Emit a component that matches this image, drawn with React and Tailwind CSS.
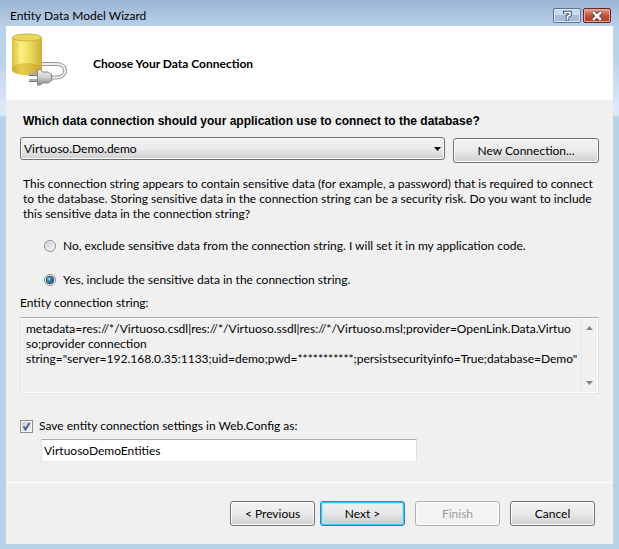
import { useState } from "react";

const BUTTON_BASE = "h-[25px] rounded-[3px] border text-center whitespace-nowrap";
const BUTTON_FACE =
  "bg-linear-to-b from-[#f2f2f2] from-0% via-[#ebebeb] via-48% to-[#cfcfcf] to-100% shadow-[inset_0_0_0_1px_#fcfcfc]";

function Button({ children, className = "", variant = "normal", ...rest }) {
  const variants = {
    normal: `border-[#707070] ${BUTTON_FACE}`,
    primary:
      "border-[#3c7fb1] bg-linear-to-b from-[#f0f0f0] via-[#e6e8e9] via-48% to-[#cacbcc] shadow-[inset_0_0_0_1px_#35cdf5,inset_0_0_0_2px_#a5e3f5]",
    disabled: "border-[#adb2b5] bg-[#f4f4f4] text-[#9a9a9a] shadow-[inset_0_0_0_1px_#fbfbfb]",
  };
  return (
    <button type="button" disabled={variant === "disabled"} className={`${BUTTON_BASE} ${variants[variant]} ${className}`} {...rest}>
      {children}
    </button>
  );
}

function DatabaseIcon() {
  return (
    <svg width="58" height="54" viewBox="0 0 58 54" aria-hidden="true">
      <defs>
        <linearGradient id="body" x1="0" x2="1" y1="0" y2="0">
          <stop offset="0" stopColor="#d9bd35" />
          <stop offset="0.3" stopColor="#fbf384" />
          <stop offset="0.6" stopColor="#ecdc5e" />
          <stop offset="1" stopColor="#cdac35" />
        </linearGradient>
        <linearGradient id="plug" x1="0" x2="0" y1="0" y2="1">
          <stop offset="0" stopColor="#f4f4f4" />
          <stop offset="0.5" stopColor="#cfcfcf" />
          <stop offset="1" stopColor="#8c8c8c" />
        </linearGradient>
      </defs>
      <path d="M0 4.500v32.500c0 3 6.500 5.500 15 5.500s15-2.500 15-5.500V4.500z" fill="url(#body)" />
      <ellipse cx="15" cy="36" rx="15" ry="6" fill="#c79a12" opacity="0.45" />
      <ellipse cx="15" cy="4.500" rx="14.500" ry="3.500" fill="#e9d65c" stroke="#d0b040" />
      <path d="M30 31h14c5 0 9 2 9 6.500s-4 7-9 7h-6" fill="none" stroke="#999" strokeWidth="4" />
      <path d="M30 31h14c5 0 9 2 9 6.500s-4 7-9 7h-6" fill="none" stroke="#ededed" strokeWidth="2" />
      <path d="M17 41.500h9M17 47.500h9" stroke="#777" strokeWidth="3" />
      <path d="M17 41h8M17 47h8" stroke="#e4e4e4" strokeWidth="1" />
      <path d="M25.500 36.500h3l2 2.500h6l2 2h1v7h-1l-2 2h-6l-2 2h-3z" fill="url(#plug)" stroke="#858585" />
    </svg>
  );
}

function TitleBar() {
  return (
    <header className="flex h-[26px] items-start justify-between pl-1 pr-[2px]">
      <h1 className="pt-2 leading-4">Entity Data Model Wizard</h1>
      <div className="flex gap-[2px] pt-2">
        <button
          type="button"
          aria-label="Help"
          className="flex h-[15px] w-7 items-center justify-center rounded-[2px] border border-[#60738c] bg-linear-to-b from-[#c9dbee] from-50% to-[#a5bdd8] to-50% shadow-[inset_0_0_0_1px_#dbe8f5]"
        >
          <svg width="9" height="12" viewBox="0 0 9 12" fill="none">
            <path d="M1.500 4V2.500h5.500V5L4.500 6.500V8M4.500 9v2" stroke="#46536a" strokeWidth="3.500" />
            <path d="M2 4V2.500h5V5L4.500 6.500V8M4.500 9v1.500" stroke="#fff" strokeWidth="1.500" />
          </svg>
        </button>
        <button
          type="button"
          aria-label="Close"
          className="flex h-[15px] w-7 items-center justify-center rounded-[2px] border border-[#6b2420] bg-linear-to-b from-[#d9978b] from-10% via-[#c4523d] via-50% to-[#b93d25] shadow-[inset_0_0_0_1px_#e0aaa0]"
        >
          <svg width="12" height="10" viewBox="0 0 12 10" fill="none">
            <path d="M2 1l8 8M10 1l-8 8" stroke="#5c3b3e" strokeWidth="4.500" />
            <path d="M3 2l6 6M9 2l-6 6" stroke="#fff" strokeWidth="2.500" strokeLinecap="square" />
          </svg>
        </button>
      </div>
    </header>
  );
}

function RadioOption({ checked, onChange, children }) {
  return (
    <label className="flex items-center gap-[7px] leading-4">
      <span className="grid shrink-0">
        <input
          type="radio"
          name="sensitive"
          checked={checked}
          onChange={onChange}
          className="col-start-1 row-start-1 size-3 appearance-none rounded-full border border-[#8b8f91] bg-linear-to-br from-[#c9cdd1] to-[#f9f9f9] shadow-[inset_0_0_0_1px_#f1f1f1]"
        />
        {checked && (
          <span className="pointer-events-none col-start-1 row-start-1 size-[6px] place-self-center rounded-full bg-radial-[at_35%_35%] from-[#8fdcf5] from-5% via-[#1f74a3] via-45% to-[#0b3554] shadow-[0_0_0_1px_#1d4563]" />
        )}
      </span>
      {children}
    </label>
  );
}

const CONNECTION_STRING = [
  "metadata=res://*/Virtuoso.csdl|res://*/Virtuoso.ssdl|res://*/Virtuoso.msl;provider=OpenLink.Data.Virtuo",
  "so;provider connection",
  'string="server=192.168.0.35:1133;uid=demo;pwd=***********;persistsecurityinfo=True;database=Demo"',
].join("\n");

export default function App() {
  const [include, setInclude] = useState(true);
  const [save, setSave] = useState(true);
  const [name, setName] = useState("VirtuosoDemoEntities");

  return (
    <div className="flex min-h-screen flex-col bg-[linear-gradient(to_bottom,#9ab4d2_0px,#bcd2eb_28px,#bcd2eb_60px,#dce9f7_108px,#dce9f7_115px,#bad1ea_117px)] px-[6px] pb-[5px] font-[Lato,'Open_Sans',sans-serif] text-[12px] text-black">
      <TitleBar />
      <main className="flex flex-1 flex-col bg-[#f0f0f0]">
        <div className="flex h-[74px] items-start bg-white pl-[6px] pt-[7px]">
          <DatabaseIcon />
          <h2 className="pl-[23px] pt-[23px] font-bold leading-4">Choose Your Data Connection</h2>
        </div>

        <form className="flex flex-col px-[14px] pt-3" onSubmit={(e) => e.preventDefault()}>
          <label htmlFor="connection" className="pl-[3px] font-['Liberation_Sans',Arial,sans-serif] font-bold leading-[18px]">
            Which data connection should your application use to connect to the database?
          </label>
          <div className="mt-[7px] flex items-start gap-2">
            <div className="grid min-w-0 flex-1">
              <select
                id="connection"
                className={`col-start-1 row-start-1 h-[23px] w-full appearance-none rounded-[3px] border border-[#707070] pl-[3px] ${BUTTON_FACE}`}
              >
                <option>Virtuoso.Demo.demo</option>
              </select>
              <svg className="pointer-events-none col-start-1 row-start-1 mr-1 self-center justify-self-end" width="7" height="4" viewBox="0 0 7 4">
                <path d="M0 0h7L3.500 4z" />
              </svg>
            </div>
            <Button className="mt-px w-[146px]">New Connection...</Button>
          </div>

          <p className="mt-[13px] pl-[3px] leading-[15px] whitespace-nowrap">
            This connection string appears to contain sensitive data (for example, a password) that is required to connect
            <br />
            to the database. Storing sensitive data in the connection string can be a security risk. Do you want to include
            <br />
            this sensitive data in the connection string?
          </p>

          <div className="mt-[17px] flex flex-col gap-[18px] pl-6">
            <RadioOption checked={!include} onChange={() => setInclude(false)}>
              No, exclude sensitive data from the connection string. I will set it in my application code.
            </RadioOption>
            <RadioOption checked={include} onChange={() => setInclude(true)}>
              Yes, include the sensitive data in the connection string.
            </RadioOption>
          </div>

          <label htmlFor="string" className="mt-[7px] leading-4">
            Entity connection string:
          </label>
          <div className="mt-[6px] flex h-[77px] border border-t-[#abadb3] border-r-[#dbdfe6] border-b-[#e3e9ef] border-l-[#e2e3ea] shadow-[inset_0_0_0_1px_#fcfcfc]">
            <textarea
              id="string"
              readOnly
              wrap="off"
              value={CONNECTION_STRING}
              className="min-w-0 flex-1 resize-none overflow-hidden pl-[5px] pt-[3px] leading-[15px]"
            />
            <div className="m-px flex w-4 flex-col items-center justify-between border-l border-[#e4e4e4] py-[7px]">
              <svg width="7" height="4" viewBox="0 0 7 4">
                <path d="M0 4h7L3.500 0z" fill="#838383" />
              </svg>
              <svg width="7" height="4" viewBox="0 0 7 4">
                <path d="M0 0h7L3.500 4z" fill="#838383" />
              </svg>
            </div>
          </div>

          <label className="mt-6 flex items-center gap-[6px] leading-4">
            <span className="grid shrink-0">
              <input
                type="checkbox"
                checked={save}
                onChange={(e) => setSave(e.target.checked)}
                className="col-start-1 row-start-1 size-[13px] appearance-none border border-[#8e8f8f] bg-linear-to-br from-[#c4cbd5] to-[#f6f6f6] shadow-[inset_0_0_0_1px_#f4f4f4]"
              />
              {save && (
                <svg className="pointer-events-none col-start-1 row-start-1" width="13" height="13" viewBox="0 0 13 13" fill="none">
                  <path d="M3.500 6.500l2 3L9.500 3" stroke="#4a5f97" strokeWidth="2" />
                </svg>
              )}
            </span>
            Save entity connection settings in Web.Config as:
          </label>
          <input
            aria-label="Entity connection settings name"
            value={name}
            onChange={(e) => setName(e.target.value)}
            className="ml-[21px] mt-[5px] h-[23px] w-[65%] border border-t-[#abadb3] border-r-[#dbdfe6] border-b-[#e3e9ef] border-l-[#e2e3ea] bg-white pl-[2px]"
          />
        </form>

        <footer className="mt-5 flex justify-end border-t border-white pr-[18px] pt-[18px]">
          <Button className="mr-[5px] w-[85px]">&lt; Previous</Button>
          <Button variant="primary" className="mr-[10px] w-[85px]">Next &gt;</Button>
          <Button variant="disabled" className="mr-[10px] w-[85px]">Finish</Button>
          <Button className="w-[85px]">Cancel</Button>
        </footer>
      </main>
    </div>
  );
}
